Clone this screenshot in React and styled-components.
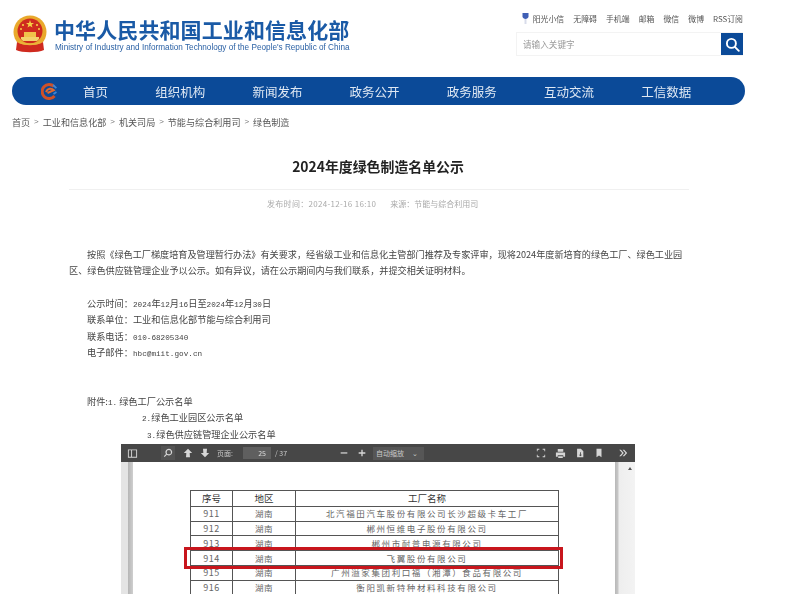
import React from 'react';
import styled, { createGlobalStyle } from 'styled-components';

const Global = createGlobalStyle`
  html, body { margin: 0; padding: 0; background: #fff; overflow: hidden; }
  body { font-family: "Noto Sans CJK SC", "Liberation Sans", sans-serif; }
`;
const Page = styled.div`
  width: 800px; height: 594px; overflow: hidden; box-sizing: border-box;
  padding-left: 12px; color: #444; filter: blur(0.35px);
`;
const Header = styled.header`
  width: 733px; height: 77px; display: flex; justify-content: space-between;
`;
const Brand = styled.div`display: flex; align-items: flex-start; padding-top: 15px;`;
const BrandText = styled.div`margin-left: 6px; display: flex; flex-direction: column;`;
const BrandCn = styled.div`
  font-size: 21px; line-height: 22px; margin-top: 3px; font-weight: 700; color: #1a5aa6; white-space: nowrap; letter-spacing: 0.1px;
`;
const BrandEn = styled.div`
  font-family: "Liberation Sans", sans-serif; font-size: 8.2px; line-height: 10px; margin: 3px 0 0 1px;
  color: #2c62a5; white-space: nowrap;
`;
const Tools = styled.div`display: flex; flex-direction: column; align-items: flex-end; width: 228px; margin-right: 2px;`;
const TopLinks = styled.div`
  display: flex; align-items: center; gap: 9px; height: 18px; margin-top: 9px; font-size: 7.9px; color: #555; white-space: nowrap;
`;
const SunLink = styled.span`display: flex; align-items: center; gap: 3px;`;
const Search = styled.div`
  margin-top: 5px; width: 227px; height: 24px; box-sizing: border-box; border: 1px solid #f3f3f3; border-right: 0;
  display: flex; align-items: center; justify-content: space-between; padding-left: 6px;
`;
const Placeholder = styled.span`font-size: 8.6px; color: #999;`;
const SearchBtn = styled.div`
  width: 22px; height: 22px; background: #0b4a98; display: flex; align-items: center; justify-content: center;
`;
const Nav = styled.nav`
  width: 733px; height: 28px; border-radius: 14px; background: #0b4a98; box-sizing: border-box; padding-left: 29px;
  display: flex; align-items: center; gap: 47.2px; color: #dfe8f3; font-size: 12.5px; white-space: nowrap;
`;
const NavLogo = styled.span`display: flex; width: 16px; margin-right: -21.2px;`;
const Crumbs = styled.div`
  margin-top: 10px; height: 14px; line-height: 14px; display: flex; font-size: 9.1px; color: #555; white-space: nowrap;
`;
const Sep = styled.span`width: 12.5px; text-align: center; font-family: "Liberation Sans", sans-serif; font-size: 8px; color: #777;`;
const Article = styled.article`margin-left: 57px; width: 620px;`;
const Title = styled.h1`
  margin: 27px -8px 0 -10px; height: 20px; line-height: 20px; font-size: 13.9px; font-weight: 700; color: #222; text-align: center;
`;
const Meta = styled.div`
  margin-top: 13px; border-top: 1px solid #f0f0f0; padding: 8px 0 0 198px; height: 12px; line-height: 12px; display: flex; gap: 14px;
  font-size: 8px; color: #aaa; white-space: nowrap;
`;
const Stamp = styled.span`letter-spacing: 0.3px;`;
const Para = styled.p`
  margin: 36px 0 0; font-size: 9.14px; line-height: 16.4px; text-indent: 18px; color: #444;
  word-break: break-all;
`;
const Lines = styled.div`margin-top: ${p => p.$top}px; padding-left: 18px; font-size: 9.2px; color: #444;`;
const Line = styled.div`
  height: 16.5px; line-height: 16.5px; padding-left: ${p => p.$indent || 0}px; white-space: nowrap;
`;
const Mono = styled.span`font-family: "Liberation Mono", monospace; font-size: 7.7px;`;
const Lead = styled.span`margin-right: 2px;`;
const Viewer = styled.div`
  margin-top: 2px; margin-left: 109px; width: 514px; height: 150px; background: #fff; overflow: hidden;
  display: flex; flex-direction: column;
`;
const Bar = styled.div`
  height: 18px; flex: none; background: #474747; color: #c9c9c9; display: flex; align-items: center; font-size: 7px; white-space: nowrap;
`;
const Tool = styled.span`
  display: flex; align-items: center; justify-content: center; width: 14px; height: 14px; margin-left: ${p => p.$ml || 0}px; flex: none;
  background: ${p => (p.$active ? '#535353' : 'transparent')};
`;
const PageLabel = styled.span`margin-left: 5px;`;
const PageInput = styled.span`
  width: 28px; height: 12px; background: #5f5f5f; text-align: right; line-height: 12px; padding-right: 5px; box-sizing: border-box; margin-left: 10px; color: #ddd;
`;
const Select = styled.span`
  margin-left: 4px; width: 51px; height: 13px; background: #565656; line-height: 13px; padding: 0 6px 0 3px; box-sizing: border-box; display: flex; justify-content: space-between;
`;
const Total = styled.span`margin-left: 4px;`;
const Work = styled.div`flex: 1; display: flex; min-height: 0;`;
const LeftGutter = styled.div`width: 12px; flex: none; background: linear-gradient(to right, #e4e4e4 0 7px, #b5b5b5 7px, #cfcfcf 12px);`;
const Sheet = styled.div`flex: 1; padding: 28px 0 0 57px; background: #fff; position: relative;`;
const Scroll = styled.div`
  width: 20px; flex: none; background: linear-gradient(to right, #b8b8b8 0, #c8c8c8 3px, #eee 4px, #f3f3f3 20px); display: flex; justify-content: flex-end; padding: 5px 3px 0 0; box-sizing: border-box;
`;
const Arrow = styled.span`
  width: 0; height: 0; border-left: 2px solid transparent; border-right: 2px solid transparent; border-bottom: 3px solid #555;
`;
const Table = styled.table`
  width: 368px; border-collapse: collapse; table-layout: fixed; color: #666; font-size: 8.5px;
`;
const Col = styled.col`width: ${p => p.$w}px;`;
const Th = styled.th`
  height: 14.5px; padding: 0; border: 1px solid #555; font-weight: 400; font-size: 9.5px; color: #333; line-height: 13px; text-align: center;
`;
const Td = styled.td`
  height: 13.8px; padding: 0; border: 1px solid #555; text-align: center; line-height: 13px; white-space: nowrap; overflow: hidden;
  letter-spacing: ${p => (p.$wide ? '1.6px' : '0.5px')}; font-size: ${p => (p.$num ? '9px' : '8.5px')};
`;
const Highlight = styled.div`
  position: absolute; left: 51px; top: 85px; width: 379px; height: 22px; border: 3px solid #c8161d; box-sizing: border-box;
`;

const Emblem = () => (
  <svg width="36" height="38" viewBox="0 0 36 38">
    <circle cx="18" cy="17" r="16.5" fill="#e9a92c" />
    <circle cx="18" cy="16" r="12.5" fill="#cf2a1f" />
    <polygon points="18,5 19,8 22,8 19.6,9.8 20.5,12.6 18,11 15.5,12.6 16.4,9.8 14,8 17,8" fill="#f5cf45" />
    <circle cx="11" cy="10" r="1.1" fill="#f5cf45" /><circle cx="25" cy="10" r="1.1" fill="#f5cf45" />
    <circle cx="9" cy="14" r="1" fill="#f5cf45" /><circle cx="27" cy="14" r="1" fill="#f5cf45" />
    <path d="M9 22h18v2l-2 2H11l-2-2z" fill="#f3d26a" />
    <path d="M12 17h12v5H12z" fill="#f0c24a" />
    <path d="M5 27c5 4 21 4 26 0l1 8c-6 3-22 3-28 0z" fill="#cf2a1f" />
    <path d="M8 26c5 3 15 3 20 0l1 2c-6 3-16 3-22 0z" fill="#eab43a" />
  </svg>
);
const SearchIcon = () => (
  <svg width="15" height="15" viewBox="0 0 15 15" fill="none" stroke="#fff" strokeWidth="1.9">
    <circle cx="6.4" cy="6.4" r="4.5" /><path d="M9.8 9.800l4 4" strokeLinecap="round" />
  </svg>
);
const NavMark = () => (
  <svg width="16" height="17" viewBox="0 0 16 17" fill="none">
    <path d="M13 3.500A7 7 0 1 0 13.500 13" stroke="#cf5128" strokeWidth="3" />
    <path d="M5 9c1.500-3.600 5.500-4.200 7.800-1.800L6.500 10" stroke="#e2692f" strokeWidth="2" />
    <path d="M12 2l3.400 3.200M15.500 9l-3 2" stroke="#3f86d4" strokeWidth="1.800" />
  </svg>
);
const Sunshine = () => (
  <svg width="9" height="13" viewBox="0 0 8 13">
    <path d="M1 1h6v3.200C7 6 5.400 7 4 7S1 6 1 4.200z" fill="#3f5fb5" />
    <path d="M4 7v5" stroke="#d8dcea" strokeWidth="2" />
  </svg>
);
const ToolIcon = ({ d, s = 11 }) => (
  <svg width={s} height={s} viewBox="0 0 12 12"><path d={d} fill="#d6d6d6" fillRule="evenodd" /></svg>
);
const icons = {
  sidebar: 'M1 1.500h10v9H1zM2 2.500v7h2.500v-7zM5.500 2.500v7H10v-7z',
  search: 'M7 1a4 4 0 1 1-2.400 7.200L2 10.800 1 9.800l2.600-2.600A4 4 0 0 1 7 1zm0 1.400A2.600 2.600 0 1 0 7 7.600 2.600 2.600 0 0 0 7 2.400z',
  up: 'M6 1l5 5H8l.4 5H3.600L4 6H1z',
  down: 'M3.600 1h4.800L8 6h3l-5 5-5-5h3z',
  minus: 'M2 5.200h8v1.500H2z',
  plus: 'M5.200 2h1.600v3.200H10v1.600H6.800V10H5.200V6.800H2V5.200h3.200z',
  full: 'M1 1h3v1H2v2H1zM8 1h3v3h-1V2H8zM1 8h1v2h2v1H1zM10 8h1v3H8v-1h2z',
  print: 'M3 1h6v3H3zM1 5h10v4.500H9V8H3v1.500H1zM3.500 9h5v2h-5z',
  save: 'M2.500 1H7l3 3v7H2.500zM6 5v3H4.500L6.500 10l2-2H7V5z',
  mark: 'M3 1h6v10L6 9l-3 2z',
  more: 'M1.500 2l3.500 4-3.500 4h2L7 6 3.500 2zM5.500 2L9 6l-3.500 4h2L11 6 7.500 2z',
};
const rows = [
  ['911', '北汽福田汽车股份有限公司长沙超级卡车工厂'],
  ['912', '郴州恒维电子股份有限公司'],
  ['913', '郴州市耐普电源有限公司'],
  ['914', '飞翼股份有限公司'],
  ['915', '广州溢家集团利口福（湘潭）食品有限公司'],
  ['916', '衡阳凯新特种材料科技有限公司'],
];
const crumbs = ['首页', '工业和信息化部', '机关司局', '节能与综合利用司', '绿色制造'];

export default function App() {
  return (
    <Page>
      <Global />
      <Header>
        <Brand>
          <Emblem />
          <BrandText>
            <BrandCn>中华人民共和国工业和信息化部</BrandCn>
            <BrandEn>Ministry of Industry and Information Technology of the People's Republic of China</BrandEn>
          </BrandText>
        </Brand>
        <Tools>
          <TopLinks>
            <SunLink><Sunshine />阳光小信</SunLink>
            <span>无障碍</span><span>手机端</span><span>邮箱</span><span>微信</span><span>微博</span><span>RSS订阅</span>
          </TopLinks>
          <Search>
            <Placeholder>请输入关键字</Placeholder>
            <SearchBtn><SearchIcon /></SearchBtn>
          </Search>
        </Tools>
      </Header>
      <Nav>
        <NavLogo><NavMark /></NavLogo>
        {['首页', '组织机构', '新闻发布', '政务公开', '政务服务', '互动交流', '工信数据'].map(t => <span key={t}>{t}</span>)}
      </Nav>
      <Crumbs>
        {crumbs.map((c, i) => (
          <React.Fragment key={c}>{i > 0 && <Sep>&gt;</Sep>}<span>{c}</span></React.Fragment>
        ))}
      </Crumbs>
      <Article>
        <Title>2024年度绿色制造名单公示</Title>
        <Meta>
          <Stamp>发布时间：2024-12-16 16:10</Stamp>
          <span>来源：节能与综合利用司</span>
        </Meta>
        <Para>按照《绿色工厂梯度培育及管理暂行办法》有关要求，经省级工业和信息化主管部门推荐及专家评审，现将2024年度新培育的绿色工厂、绿色工业园区、绿色供应链管理企业予以公示。如有异议，请在公示期间内与我们联系，并提交相关证明材料。</Para>
        <Lines $top={16}>
          <Line>公示时间：<Mono>2024</Mono>年<Mono>12</Mono>月<Mono>16</Mono>日至<Mono>2024</Mono>年<Mono>12</Mono>月<Mono>30</Mono>日</Line>
          <Line>联系单位：工业和信息化部节能与综合利用司</Line>
          <Line>联系电话：<Mono>010-68205340</Mono></Line>
          <Line>电子邮件：<Mono>hbc@miit.gov.cn</Mono></Line>
        </Lines>
        <Lines $top={32}>
          <Line>附件:<Lead><Mono>1.</Mono></Lead>绿色工厂公示名单</Line>
          <Line $indent={55}><Mono>2.</Mono>绿色工业园区公示名单</Line>
          <Line $indent={60}><Mono>3.</Mono>绿色供应链管理企业公示名单</Line>
        </Lines>
      </Article>
      <Viewer>
        <Bar>
          <Tool $ml={4}><ToolIcon d={icons.sidebar} /></Tool>
          <Tool $ml={22} $active><ToolIcon d={icons.search} s={10} /></Tool>
          <Tool $ml={6}><ToolIcon d={icons.up} s={10} /></Tool>
          <Tool $ml={3}><ToolIcon d={icons.down} s={10} /></Tool>
          <PageLabel>页面:</PageLabel>
          <PageInput>25</PageInput>
          <Total>/ 37</Total>
          <Tool $ml={50}><ToolIcon d={icons.minus} s={10} /></Tool>
          <Tool $ml={4}><ToolIcon d={icons.plus} s={10} /></Tool>
          <Select>自动缩放<span>⌄</span></Select>
          <Tool $ml={110}><ToolIcon d={icons.full} s={10} /></Tool>
          <Tool $ml={5}><ToolIcon d={icons.print} s={11} /></Tool>
          <Tool $ml={6}><ToolIcon d={icons.save} s={10} /></Tool>
          <Tool $ml={5}><ToolIcon d={icons.mark} s={10} /></Tool>
          <Tool $ml={10}><ToolIcon d={icons.more} s={10} /></Tool>
        </Bar>
        <Work>
          <LeftGutter />
          <Sheet>
            <Table>
              <colgroup><Col $w={42} /><Col $w={63} /><Col $w={263} /></colgroup>
              <thead><tr><Th>序号</Th><Th>地区</Th><Th>工厂名称</Th></tr></thead>
              <tbody>
                {rows.map(([n, name]) => (
                  <tr key={n}><Td $num>{n}</Td><Td>湖南</Td><Td $wide>{name}</Td></tr>
                ))}
              </tbody>
            </Table>
            <Highlight />
          </Sheet>
          <Scroll><Arrow /></Scroll>
        </Work>
      </Viewer>
    </Page>
  );
}
